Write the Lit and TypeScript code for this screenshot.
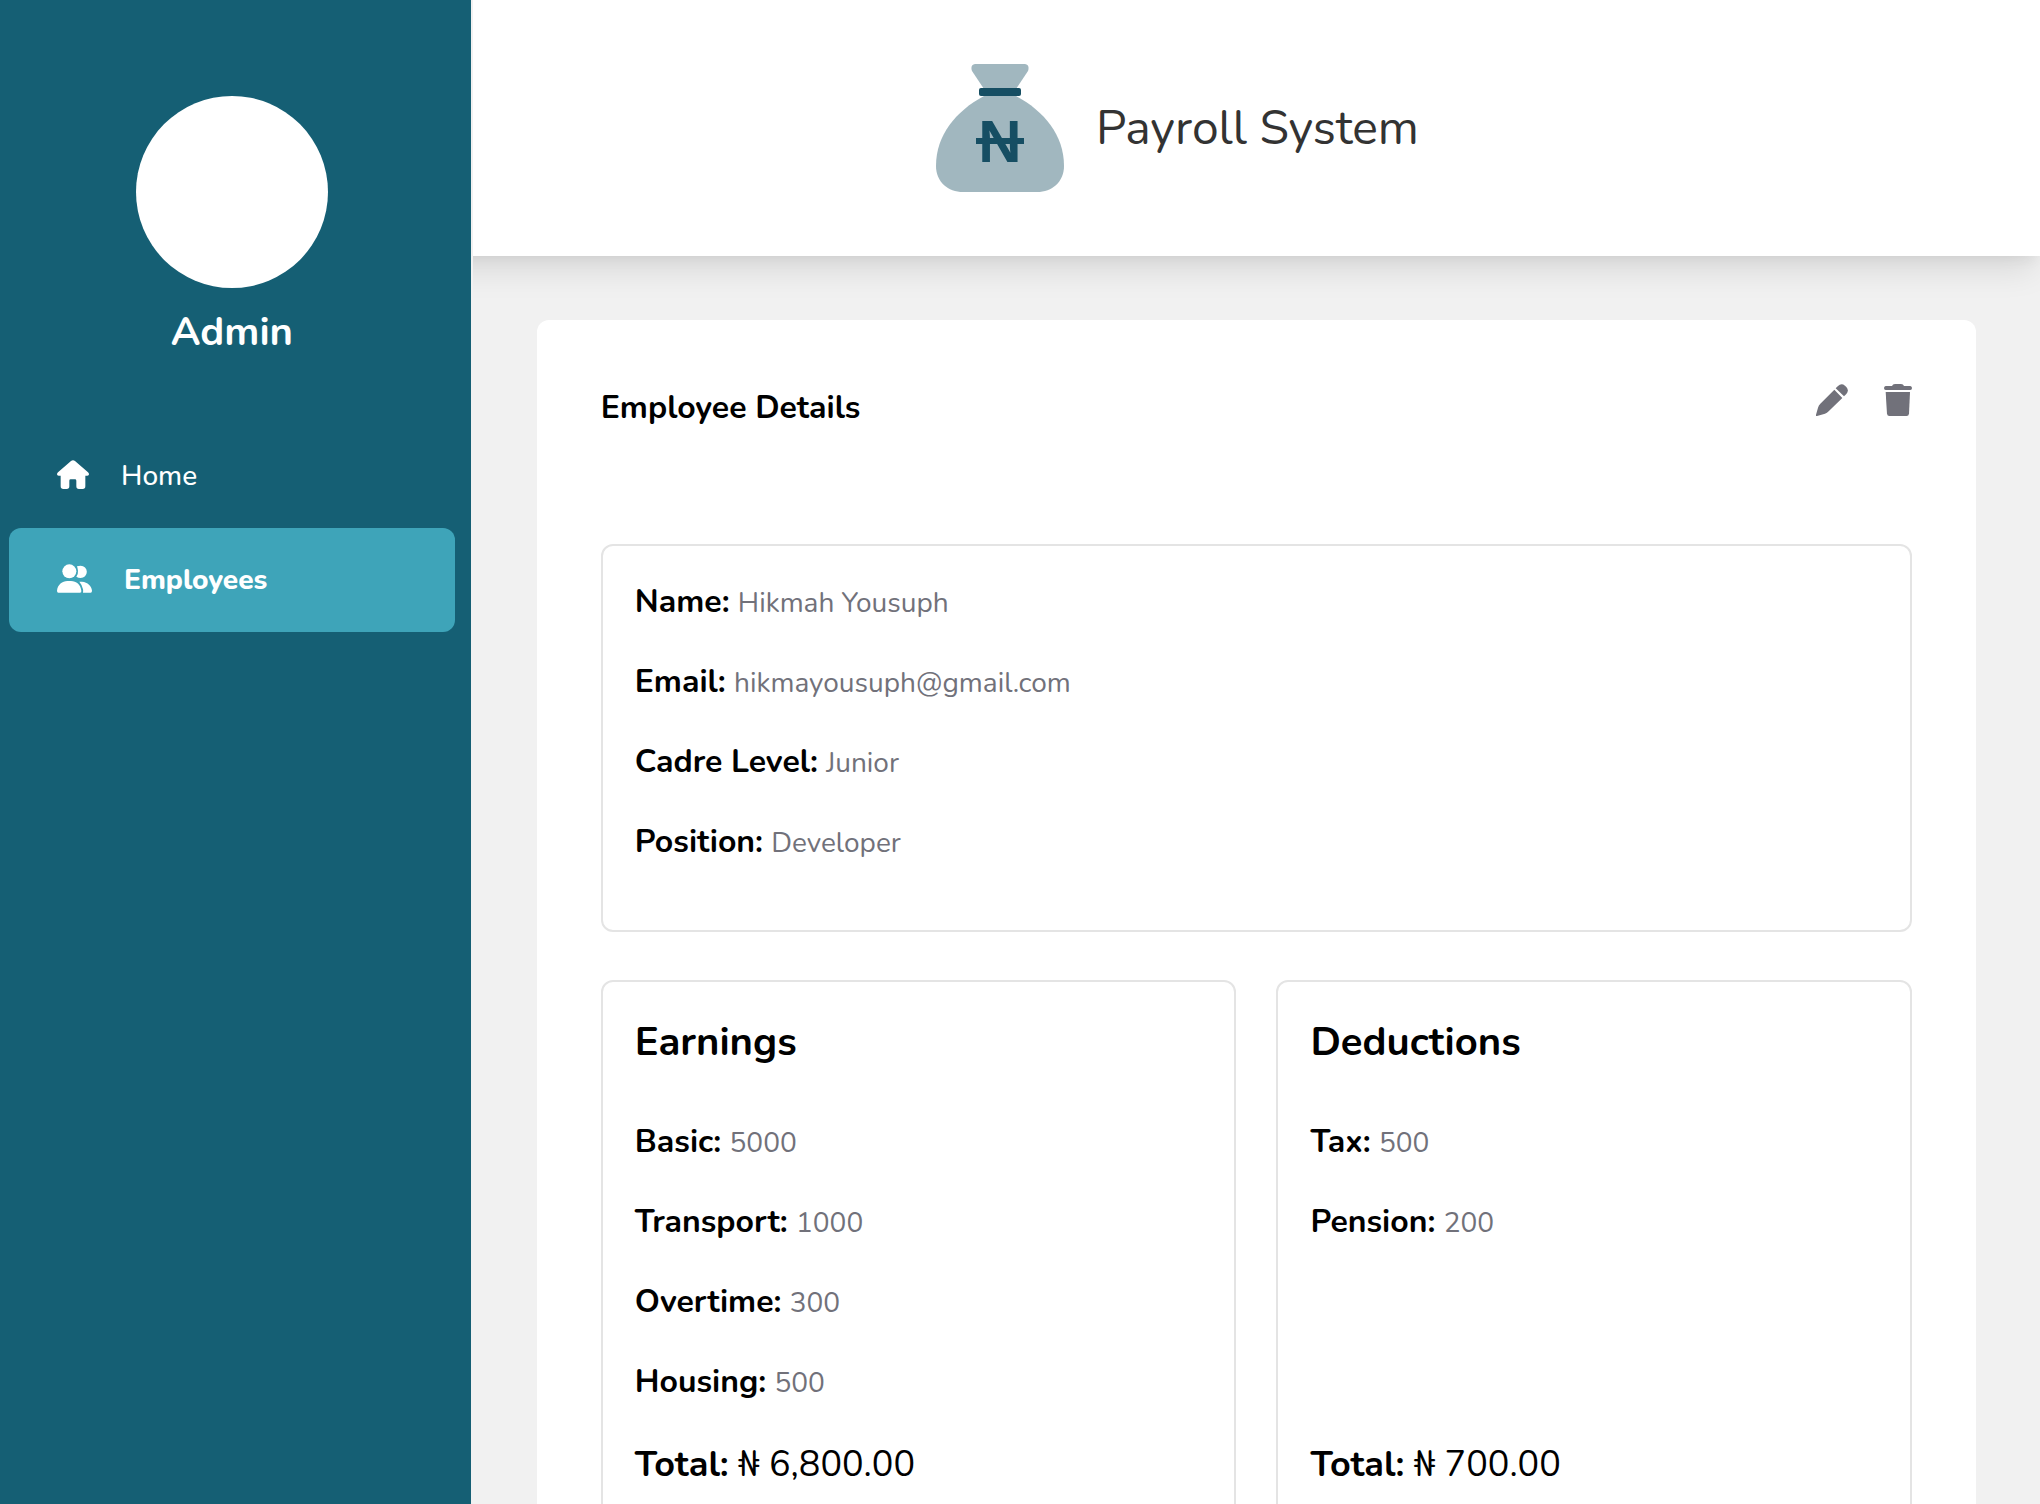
import { LitElement, html, css, svg } from "lit";
import { customElement, property } from "lit/decorators.js";

interface Field {
  label: string;
  value: string;
}

const profile: Field[] = [
  { label: "Name", value: "Hikmah Yousuph" },
  { label: "Email", value: "hikmayousuph@gmail.com" },
  { label: "Cadre Level", value: "Junior" },
  { label: "Position", value: "Developer" },
];

const earnings: Field[] = [
  { label: "Basic", value: "5000" },
  { label: "Transport", value: "1000" },
  { label: "Overtime", value: "300" },
  { label: "Housing", value: "500" },
];

const deductions: Field[] = [
  { label: "Tax", value: "500" },
  { label: "Pension", value: "200" },
];

const homeIcon = svg`
  <path fill="currentColor" d="M42 7 Q48 2 54 7 L93 41 Q96 44 96 47 Q96 51 91 51 L85 51 L85 83 Q85 91 77 91 L66 91 Q58 91 58 83 L58 66 Q58 62 54 62 L41 62 Q37 62 37 66 L37 83 Q37 91 29 91 L19 91 Q11 91 11 83 L11 51 L5 51 Q0 51 0 47 Q0 44 3 41 Z"/>`;

const peopleIcon = svg`
  <circle fill="currentColor" cx="37" cy="22" r="21"/>
  <path fill="currentColor" d="M60 7 Q65 5 71 5 A18.500 18.500 0 0 1 71 42 Q64 42 58 38 Q64 30 63 20 Q62 13 60 7 Z"/>
  <path fill="currentColor" d="M4 86 Q0 86 0 80 C2 62 16 51 31 51 L42 51 C58 51 71 62 73 80 Q74 86 69 86 Z"/>
  <path fill="currentColor" d="M67 53 L75 53 C92 54 104 66 105 80 Q105 86 101 86 L78 86 Q79 80 78 76 Q75 62 67 53 Z"/>`;

const pencilIcon = svg`
  <path fill="currentColor" d="M66 6 Q76 -4 87 5 L91 9 Q100 19 91 30 L84 37 L59 13 Z"/>
  <path fill="currentColor" d="M55 17 L79 42 L38 82 Q33 87 27 89 L3 96 Q-1 97 0 92 L6 71 Q8 63 13 59 Z"/>`;

const trashIcon = svg`
  <path fill="currentColor" d="M24 6 Q26 0 33 0 L51 0 Q58 0 60 6 L79 6 Q84 7 84 12 Q84 18 79 18 L5 18 Q0 18 0 12 Q0 7 5 6 Z"/>
  <path fill="currentColor" d="M5 24 L78 24 L75 89 Q74 96 68 96 L16 96 Q10 96 9 89 Z"/>`;

@customElement("pay-field")
class PayField extends LitElement {
  static styles = css`
    :host {
      display: block;
      font-size: 32px;
      line-height: 48px;
    }
    .label {
      font-weight: 700;
      color: #000;
    }
    .value {
      font-size: 28px;
      line-height: 40px;
      color: #71717a;
    }
  `;

  @property() label = "";
  @property() value = "";

  render() {
    return html`<span class="label">${this.label}:</span> <span class="value">${this.value}</span>`;
  }
}

@customElement("pay-summary")
class PaySummary extends LitElement {
  static styles = css`
    :host {
      display: flex;
      flex-direction: column;
      min-height: 640px;
      box-sizing: border-box;
      padding: 32px;
      border: 2px solid #e4e4e4;
      border-radius: 12px;
    }
    .title {
      margin: 0 0 48px;
      font-size: 40px;
      line-height: 56px;
      font-weight: 700;
    }
    .rows {
      display: flex;
      flex-direction: column;
      gap: 32px;
      min-height: 320px;
      box-sizing: border-box;
      padding-bottom: 32px;
    }
    .total {
      margin: 0;
      font-size: 36px;
      line-height: 54px;
    }
    .total-label {
      font-weight: 700;
    }
  `;

  @property() heading = "";
  @property() total = "";
  @property({ attribute: false }) fields: Field[] = [];

  render() {
    return html`
      <h2 class="title">${this.heading}</h2>
      <div class="rows">
        ${this.fields.map((f) => html`<pay-field .label=${f.label} .value=${f.value}></pay-field>`)}
      </div>
      <p class="total"><span class="total-label">Total:</span> ₦ ${this.total}</p>
    `;
  }
}

@customElement("app-root")
class AppRoot extends LitElement {
  static styles = css`
    :host {
      display: grid;
      grid-template-columns: minmax(0, 3fr) minmax(0, 10fr);
      height: 100vh;
      overflow: hidden;
      background: #f1f1f1;
      color: #000;
      font-family: Nunito, "Open Sans", sans-serif;
    }
    .sidebar {
      display: flex;
      flex-direction: column;
      box-sizing: border-box;
      padding: 96px 16px 32px 9px;
      background: #155f74;
      color: #fff;
    }
    .user {
      display: flex;
      flex-direction: column;
      align-items: center;
      gap: 16px;
      margin-bottom: 64px;
    }
    .avatar {
      width: 192px;
      height: 192px;
      border-radius: 50%;
      background: #fff;
    }
    .role {
      margin: 0;
      font-size: 40px;
      line-height: 56px;
      font-weight: 700;
    }
    .link {
      display: flex;
      align-items: center;
      gap: 32px;
      height: 104px;
      padding-left: 48px;
      border-radius: 12px;
      font-size: 28px;
      font-weight: 500;
      color: #fff;
      text-decoration: none;
    }
    .link.active {
      background: #3ea4b9;
      font-weight: 800;
    }
    .icon {
      display: block;
      height: 32px;
      width: auto;
    }
    .column {
      display: flex;
      flex-direction: column;
      min-width: 0;
      margin-left: 2px;
      overflow: hidden;
    }
    .header {
      position: relative;
      z-index: 1;
      flex: none;
      display: flex;
      align-items: center;
      justify-content: center;
      gap: 32px;
      height: 256px;
      margin-left: -158px;
      background: #fff;
      box-shadow: 0 20px 30px -6px rgba(0, 0, 0, 0.1), 0 8px 12px -4px rgba(0, 0, 0, 0.05);
    }
    .logo {
      width: 128px;
      height: 128px;
    }
    .logo-mark {
      font: 700 60px "Liberation Sans", Arial, sans-serif;
    }
    .brand {
      margin: 0;
      font-size: 48px;
      line-height: 64px;
      font-weight: 400;
      color: #333;
    }
    .content {
      flex: 1;
      min-height: 0;
      overflow-y: auto;
      scrollbar-width: none;
      padding: 64px;
    }
    .card {
      padding: 64px;
      border-radius: 12px;
      background: #fff;
    }
    .card-head {
      display: flex;
      align-items: flex-start;
      justify-content: space-between;
      margin-bottom: 112px;
    }
    .card-title {
      margin: 0;
      font-size: 32px;
      line-height: 48px;
      font-weight: 700;
    }
    .actions {
      display: flex;
      gap: 36px;
    }
    .action {
      padding: 0;
      border: 0;
      background: none;
      color: #71717a;
      cursor: pointer;
    }
    .profile {
      display: flex;
      flex-direction: column;
      gap: 32px;
      margin-bottom: 48px;
      padding: 32px 32px 64px;
      border: 2px solid #e4e4e4;
      border-radius: 12px;
    }
    .sums {
      display: grid;
      grid-template-columns: 1fr 1fr;
      gap: 40px;
    }
  `;

  render() {
    return html`
      <aside class="sidebar">
        <div class="user">
          <div class="avatar"></div>
          <h2 class="role">Admin</h2>
        </div>
        <nav>
          <a class="link" href="#home">
            <svg class="icon" viewBox="0 4 96 96" aria-hidden="true">${homeIcon}</svg>Home
          </a>
          <a class="link active" href="#employees" aria-current="page">
            <svg class="icon" viewBox="0 0 105 96" aria-hidden="true">${peopleIcon}</svg>Employees
          </a>
        </nav>
      </aside>
      <div class="column">
        <header class="header">
          <svg class="logo" viewBox="0 0 128 128" aria-hidden="true">
            <path fill="#a1b7bf" d="M39 0 H89 Q94 1 92 7 L80 25 H48 L36 7 Q34 1 39 0 Z"/>
            <path fill="#a1b7bf" d="M48 32 H80 C108 47 128 71 128 102 C128 118 116 128 101 128 H27 C12 128 0 118 0 102 C0 71 20 47 48 32 Z"/>
            <rect x="43" y="24" width="42" height="8" rx="2" fill="#164e63"/>
            <text class="logo-mark" x="64" y="98" text-anchor="middle" fill="#164e63">N</text>
            <rect x="40" y="74" width="48" height="6" fill="#164e63"/>
          </svg>
          <h1 class="brand">Payroll System</h1>
        </header>
        <main class="content">
          <section class="card">
            <div class="card-head">
              <h2 class="card-title">Employee Details</h2>
              <div class="actions">
                <button class="action" type="button" aria-label="Edit">
                  <svg class="icon" viewBox="0 0 96 96" aria-hidden="true">${pencilIcon}</svg>
                </button>
                <button class="action" type="button" aria-label="Delete">
                  <svg class="icon" viewBox="0 0 84 96" aria-hidden="true">${trashIcon}</svg>
                </button>
              </div>
            </div>
            <div class="profile">
              ${profile.map((f) => html`<pay-field .label=${f.label} .value=${f.value}></pay-field>`)}
            </div>
            <div class="sums">
              <pay-summary heading="Earnings" total="6,800.00" .fields=${earnings}></pay-summary>
              <pay-summary heading="Deductions" total="700.00" .fields=${deductions}></pay-summary>
            </div>
          </section>
        </main>
      </div>
    `;
  }
}
